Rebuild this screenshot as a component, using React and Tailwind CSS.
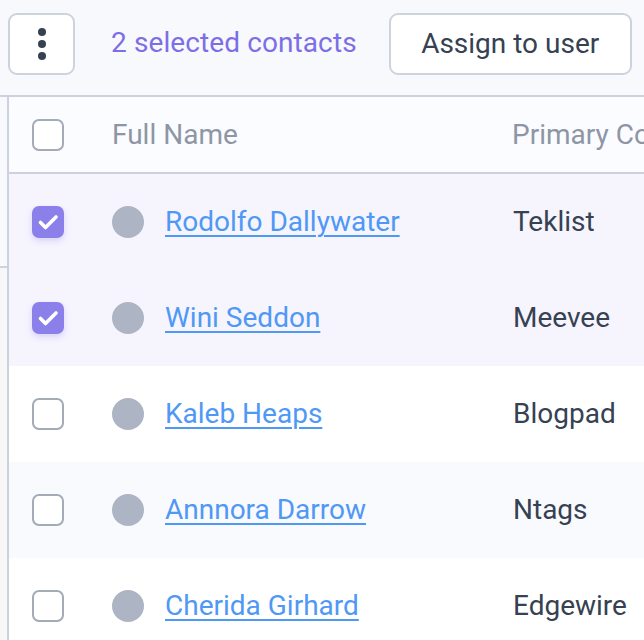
import React from "react";

const contacts = [
  { id: 1, name: "Rodolfo Dallywater", company: "Teklist", selected: true },
  { id: 2, name: "Wini Seddon", company: "Meevee", selected: true },
  { id: 3, name: "Kaleb Heaps", company: "Blogpad", selected: false },
  { id: 4, name: "Annnora Darrow", company: "Ntags", selected: false },
  { id: 5, name: "Cherida Girhard", company: "Edgewire", selected: false },
];

function Checkbox({ checked }) {
  if (checked) {
    return (
      <div className="w-[32px] h-[32px] rounded-[7px] bg-[#8b80e9] shadow-[0_3px_6px_rgba(124,111,230,0.25)] flex items-center justify-center">
        <svg width="32" height="32" viewBox="0 0 32 32" fill="none">
          <path d="M8.5 16.5 L13.5 21.5 L24 11" stroke="white" strokeWidth="3.6" strokeLinecap="round" strokeLinejoin="round" />
        </svg>
      </div>
    );
  }
  return <div className="w-[32px] h-[32px] rounded-[7px] border-2 border-[#a3abb9] bg-white" />;
}

export default function App() {
  const selectedCount = contacts.filter(c => c.selected).length;

  return (
    <div className="w-[644px] h-[640px] overflow-hidden bg-[#f8f9fd] font-['Roboto',sans-serif] text-[28px] leading-none">
      {/* toolbar */}
      <div className="h-[95px] flex items-start pt-[13px]">
        <button className="ml-[8px] w-[67px] h-[62px] rounded-[9px] border-2 border-[#ccd3df] bg-white flex flex-col items-center justify-center gap-[4px]">
          <span className="w-[8px] h-[8px] rounded-full bg-[#364152]" />
          <span className="w-[8px] h-[8px] rounded-full bg-[#364152]" />
          <span className="w-[8px] h-[8px] rounded-full bg-[#364152]" />
        </button>
        <span className="ml-[36px] h-[60px] flex items-center text-[#7c6fe6] whitespace-nowrap tracking-[0.1px]">
          {selectedCount} selected contacts
        </span>
        <button className="ml-[32px] h-[62px] w-[243px] rounded-[9px] border-2 border-[#ccd3df] bg-white text-[#364152] whitespace-nowrap shrink-0">
          Assign to user
        </button>
      </div>

      <div className="flex border-t-2 border-[#cbd2de]">
        {/* edge of the side panel */}
        <div className="w-[7px] shrink-0 flex flex-col">
          <div className="h-[169px] bg-[#f8f9fd]" />
          <div className="h-[2px] bg-[#cdd3dd]" />
          <div className="h-[400px] bg-[#f7f7f8]" />
        </div>

        <div className="flex-1 border-l-2 border-[#cbd2de] bg-white">
          {/* header */}
          <div className="h-[77px] flex items-center bg-[#fbfcff] border-b-2 border-[#cbd2de]">
            <div className="w-[103px] shrink-0 pl-[23px]">
              <Checkbox checked={false} />
            </div>
            <div className="w-[400px] shrink-0 text-[#8e96a5] whitespace-nowrap">Full Name</div>
            <div className="text-[#8e96a5] whitespace-nowrap">Primary Co</div>
          </div>

          {contacts.map((c, i) => (
            <div
              key={c.id}
              className={
                "h-[96px] flex items-center " +
                (c.selected ? "bg-[#f6f5fe]" : i % 2 === 1 ? "bg-[#f9fafe]" : "bg-white")
              }
            >
              <div className="w-[103px] shrink-0 pl-[23px]">
                <Checkbox checked={c.selected} />
              </div>
              <div className="w-[401px] shrink-0 flex items-center gap-[21px]">
                <span className="w-[32px] h-[32px] rounded-full bg-[#adb5c4] shrink-0" />
                <a href="#" className="text-[#4f98f6] underline decoration-2 underline-offset-[4px] whitespace-nowrap">
                  {c.name}
                </a>
              </div>
              <div className="text-[#364152] whitespace-nowrap">{c.company}</div>
            </div>
          ))}
        </div>
      </div>
    </div>
  );
}
